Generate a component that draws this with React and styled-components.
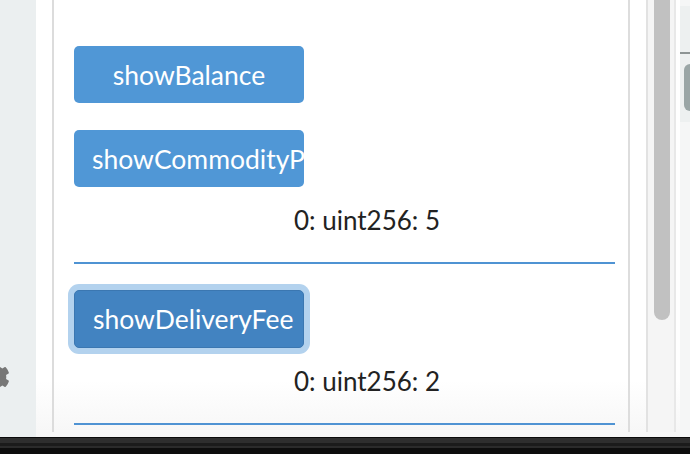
import React from 'react';
import styled, { createGlobalStyle } from 'styled-components';
import { FaCog } from 'react-icons/fa';

const GlobalStyle = createGlobalStyle`
  html, body {
    margin: 0;
    padding: 0;
    background: #ffffff;
    overflow: hidden;
  }
  body {
    font-family: Lato, "Open Sans", sans-serif;
  }
`;

const Screen = styled.div`
  width: 690px;
  height: 454px;
  display: flex;
  flex-direction: column;
`;

const Body = styled.div`
  flex: 1;
  display: flex;
  min-height: 0;
`;

const Sidebar = styled.div`
  width: 36px;
  background: #ebeff0;
  overflow: hidden;
  display: flex;
  flex-direction: column;
`;

const Gear = styled(FaCog)`
  margin-top: 362px;
  margin-left: -20px;
  color: #777777;
  flex-shrink: 0;
`;

const Main = styled.div`
  flex: 1;
  display: flex;
  padding-bottom: 5px;
  background: linear-gradient(to bottom, #ffffff 0, #ffffff 380px, #f6f6f6 100%);
`;

const Gap = styled.div`
  width: ${props => props.w}px;
  flex-shrink: 0;
`;

const Panel = styled.div`
  width: 578px;
  box-sizing: border-box;
  border-left: 2px solid #dcdcdc;
  border-right: 2px solid #dddddd;
  padding: 46px 13px 0 20px;
  display: flex;
  flex-direction: column;
  overflow: hidden;
`;

const FnButton = styled.button`
  width: 230px;
  height: ${props => props.focused ? 58 : 57}px;
  padding: 0 18px;
  box-sizing: border-box;
  border: ${props => props.focused ? '1px solid #3b77b1' : 'none'};
  border-radius: 5px;
  background: ${props => props.focused ? '#4283c1' : '#5097d6'};
  box-shadow: ${props => props.focused ? '0 0 0 6px #b3d2ee' : 'none'};
  color: #ffffff;
  font-family: Lato, "Open Sans", sans-serif;
  font-size: 26.5px;
  cursor: pointer;
  flex-shrink: 0;
  outline: none;
  overflow: hidden;
  margin-top: ${props => props.gap || 0}px;
`;

const Label = styled.span`
  display: block;
  width: 100%;
  white-space: nowrap;
  text-align: center;
`;

const Result = styled.div`
  margin-top: 18px;
  padding-left: 220px;
  font-size: 26px;
  line-height: 31px;
  color: #222222;
  white-space: nowrap;
`;

const Divider = styled.div`
  margin-top: 26px;
  height: 2px;
  background: #4f93d3;
  flex-shrink: 0;
`;

const Scroll = styled.div`
  width: 30px;
  box-sizing: border-box;
  border-left: 2px solid #e2e2e2;
  border-right: 2px solid #e8e8e8;
  background: #f5f5f5;
  padding: 0 4px 0 6px;
`;

const Thumb = styled.div`
  height: 320px;
  background: #c1c1c1;
  border-radius: 0 0 8px 8px;
`;

const RightPanel = styled.div`
  width: 10px;
  display: flex;
  flex-direction: column;
  background: #f5f6f6;
`;

const RightTop = styled.div`
  height: 46px;
  margin-top: 6px;
  background: #edf0f0;
  border-bottom: 2px solid #8d9494;
`;

const RightSection = styled.div`
  height: 68px;
  background: #edf0f0;
  padding: 10px 0 0 4px;
  box-sizing: border-box;
`;

const RightTab = styled.div`
  height: 47px;
  background: #9aa6a6;
  border-radius: 6px 0 0 6px;
`;

const BottomBar = styled.div`
  height: 17px;
  background: linear-gradient(
    to bottom,
    #0a0a0a 0,
    #0a0a0a 1px,
    #2e2e2e 1px,
    #2e2e2e 6px,
    #1b1b1b 6px,
    #1b1b1b 9px,
    #2b2b2b 9px,
    #2b2b2b 11px,
    #0d0d0d 11px
  );
`;

const functions = [
  { name: 'showBalance' },
  { name: 'showCommodityPrice', result: '0: uint256: 5' },
  { name: 'showDeliveryFee', result: '0: uint256: 2', focused: true },
];

export default function App() {
  return (
    <>
      <GlobalStyle />
      <Screen>
        <Body>
          <Sidebar>
            <Gear size={30} />
          </Sidebar>
          <Main>
            <Gap w={16} />
            <Panel>
              <FnButton gap={0}><Label>{functions[0].name}</Label></FnButton>
              <FnButton gap={27}><Label>{functions[1].name}</Label></FnButton>
              <Result>{functions[1].result}</Result>
              <Divider />
              <FnButton gap={26} focused><Label>{functions[2].name}</Label></FnButton>
              <Result>{functions[2].result}</Result>
              <Divider />
            </Panel>
            <Gap w={16} />
            <Scroll>
              <Thumb />
            </Scroll>
            <Gap w={4} />
          </Main>
          <RightPanel>
            <RightTop />
            <RightSection>
              <RightTab />
            </RightSection>
          </RightPanel>
        </Body>
        <BottomBar />
      </Screen>
    </>
  );
}
